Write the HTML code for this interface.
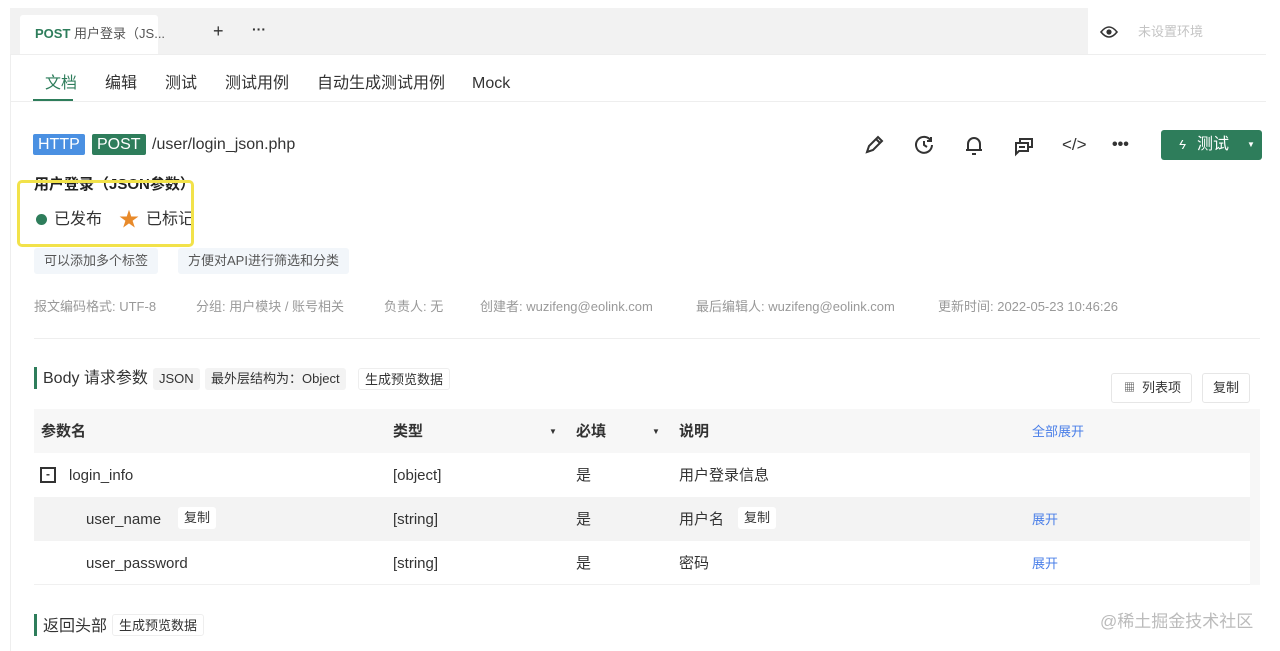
<!DOCTYPE html>
<html><head><meta charset="utf-8"><style>
*{margin:0;padding:0;box-sizing:border-box}
body{width:1280px;height:651px;background:#fff;font-family:"Liberation Sans","Noto Sans CJK SC",sans-serif;color:#333;position:relative;overflow:hidden;line-height:1.25}
.a{position:absolute;white-space:nowrap}
.tag{position:absolute;background:#f3f3f3;border-radius:3px;font-size:13px;color:#333;padding:0 6px;height:22px;line-height:22px}
.btn{position:absolute;border:1px solid #e6e6e6;background:#fff;border-radius:3px;font-size:13px;height:30px;line-height:28px;padding:0 10px}
.ic{position:absolute;width:24px;height:24px}
.meta{position:absolute;top:299px;font-size:13px;color:#999}
.row{position:absolute;left:34px;width:1216px;height:44px;font-size:15px}
.row span{position:absolute;top:13px;line-height:20px}
.blue{color:#4a7fe8;font-size:13px}
</style></head><body>
<div class="a" style="left:10px;top:8px;width:1256px;height:643px;border-left:1px solid #eee"></div>
<div class="a" style="left:10px;top:8px;width:1078px;height:46px;background:#f2f2f2"></div>
<div class="a" style="left:20px;top:15px;width:138px;height:39px;background:#fff;border-radius:3px 3px 0 0"></div>
<div class="a" style="left:35px;top:26px;font-size:13px;line-height:16px"><b style="color:#2e7d5b">POST</b> <span style="color:#555">用户登录（JS...</span></div>
<div class="a" style="left:213px;top:20px;font-size:18px;line-height:22px;color:#333">+</div>
<div class="a" style="left:252px;top:21px;font-size:14px;line-height:16px;font-weight:bold">···</div>
<div class="a" style="left:1088px;top:10px;width:178px;height:44px;background:#fff"></div>
<svg class="a" style="left:1100px;top:25px" width="18" height="14" viewBox="0 0 18 14"><path d="M1 7Q9 -3 17 7Q9 17 1 7Z" fill="none" stroke="#333" stroke-width="1.6"/><circle cx="9" cy="7" r="2.6" fill="#333"/></svg>
<div class="a" style="left:1138px;top:24px;font-size:13px;line-height:16px;color:#c4c4c4">未设置环境</div>
<div class="a" style="left:10px;top:54px;width:1256px;height:1px;background:#eee"></div>
<div class="a" style="left:45px;top:74px;font-size:16px;line-height:20px;color:#2e7d5b">文档</div>
<div class="a" style="left:33px;top:99px;width:40px;height:2px;background:#2e7d5b"></div>
<div class="a" style="left:105px;top:74px;font-size:16px;line-height:20px">编辑</div>
<div class="a" style="left:165px;top:74px;font-size:16px;line-height:20px">测试</div>
<div class="a" style="left:225px;top:74px;font-size:16px;line-height:20px">测试用例</div>
<div class="a" style="left:317px;top:74px;font-size:16px;line-height:20px">自动生成测试用例</div>
<div class="a" style="left:472px;top:74px;font-size:16px;line-height:20px">Mock</div>
<div class="a" style="left:10px;top:101px;width:1256px;height:1px;background:#eee"></div>

<div class="a" style="left:33px;top:134px;height:21px;line-height:21px;padding:0 5px;background:#4a90e2;color:#fff;font-size:16px;border-radius:2px">HTTP</div>
<div class="a" style="left:92px;top:134px;height:21px;line-height:21px;padding:0 5px;background:#2e7d5b;color:#fff;font-size:16px;border-radius:2px">POST</div>
<div class="a" style="left:152px;top:134px;font-size:16px;line-height:21px;color:#333">/user/login_json.php</div>

<svg class="ic" style="left:862px;top:133px" viewBox="0 0 24 24" fill="none" stroke="#333" stroke-width="2"><path d="M5 19l2-6 9-9 4 4-9 9z M14 6l4 4"/></svg>
<svg class="ic" style="left:912px;top:133px" viewBox="0 0 24 24" fill="none" stroke="#333" stroke-width="2"><path d="M19 8A8 8 0 1 0 20 12 M19 4v4h-4 M12 8v4l3 2"/></svg>
<svg class="ic" style="left:962px;top:133px" viewBox="0 0 24 24" fill="none" stroke="#333" stroke-width="2"><path d="M6 17V11a6 6 0 0 1 12 0v6z M4 17h16 M10 21h4"/></svg>
<svg class="ic" style="left:1012px;top:133px" viewBox="0 0 24 24" fill="none" stroke="#333" stroke-width="2"><path d="M4 10h12v8H7l-3 3z M8 10V6h12v8h-4 M7 14h6"/></svg>
<div class="a" style="left:1062px;top:135px;font-size:17px;line-height:20px;color:#333">&lt;/&gt;</div>
<div class="a" style="left:1112px;top:136px;font-size:16px;line-height:18px;font-weight:bold">•••</div>
<div class="a" style="left:1161px;top:130px;width:101px;height:30px;background:#2e7d5b;border-radius:3px;color:#fff;font-size:16px;line-height:30px;padding-left:36px">测试<span style="position:absolute;left:18px;top:0;font-size:13px;font-style:italic">ϟ</span><span style="position:absolute;left:86px;top:0;font-size:8px">▼</span></div>

<div class="a" style="left:34px;top:176px;font-size:15px;line-height:18px;font-weight:bold;color:#222">用户登录（JSON参数）</div>
<div class="a" style="left:36px;top:214px;width:11px;height:11px;border-radius:50%;background:#2e7d5b"></div>
<div class="a" style="left:54px;top:210px;font-size:16px;line-height:20px">已发布</div>
<div class="a" style="left:119px;top:208px;font-size:20px;line-height:24px;color:#e88a2a">★</div>
<div class="a" style="left:146px;top:210px;font-size:16px;line-height:20px;width:46px;overflow:hidden">已标记</div>
<div class="a" style="left:17px;top:180px;width:177px;height:67px;border:3px solid #f2e24a;border-radius:5px"></div>
<div class="tag" style="left:34px;top:248px;height:26px;line-height:26px;background:#f2f6fa;padding:0 10px;color:#555">可以添加多个标签</div>
<div class="tag" style="left:178px;top:248px;height:26px;line-height:26px;background:#f2f6fa;padding:0 10px;color:#555">方便对API进行筛选和分类</div>

<div class="meta" style="left:34px">报文编码格式: UTF-8</div>
<div class="meta" style="left:196px">分组: 用户模块 / 账号相关</div>
<div class="meta" style="left:384px">负责人: 无</div>
<div class="meta" style="left:480px">创建者: wuzifeng@eolink.com</div>
<div class="meta" style="left:696px">最后编辑人: wuzifeng@eolink.com</div>
<div class="meta" style="left:938px">更新时间:  2022-05-23 10:46:26</div>
<div class="a" style="left:34px;top:338px;width:1226px;height:1px;background:#eee"></div>

<div class="a" style="left:34px;top:367px;width:3px;height:22px;background:#2e7d5b"></div>
<div class="a" style="left:43px;top:369px;font-size:16px;line-height:20px">Body 请求参数</div>
<div class="tag" style="left:153px;top:368px">JSON</div>
<div class="tag" style="left:205px;top:368px">最外层结构为：Object</div>
<div class="tag" style="left:358px;top:368px;background:#fff;border:1px solid #eee">生成预览数据</div>
<div class="btn" style="left:1111px;top:373px;padding-left:30px">列表项<span style="position:absolute;left:12px;top:0;font-size:11px">▦</span></div>
<div class="btn" style="left:1202px;top:373px">复制</div>

<div class="a" style="left:34px;top:409px;width:1226px;height:44px;background:#f7f7f7"></div>
<div class="a" style="left:41px;top:422px;font-size:15px;line-height:20px;font-weight:bold">参数名</div>
<div class="a" style="left:393px;top:422px;font-size:15px;line-height:20px;font-weight:bold">类型</div>
<div class="a" style="left:549px;top:427px;font-size:8px;line-height:10px">▼</div>
<div class="a" style="left:576px;top:422px;font-size:15px;line-height:20px;font-weight:bold">必填</div>
<div class="a" style="left:652px;top:427px;font-size:8px;line-height:10px">▼</div>
<div class="a" style="left:679px;top:422px;font-size:15px;line-height:20px;font-weight:bold">说明</div>
<div class="a blue" style="left:1032px;top:423px;line-height:18px">全部展开</div>

<div class="row" style="top:453px;background:#fff"><span style="left:6px;top:14px;width:16px;height:16px;border:2px solid #333;font-size:12px;line-height:11px;text-align:center;font-weight:bold">-</span><span style="left:35px">login_info</span><span style="left:359px">[object]</span><span style="left:542px">是</span><span style="left:645px">用户登录信息</span></div>
<div class="row" style="top:497px;background:#f3f3f3"><span style="left:52px">user_name</span><span class="tag" style="position:absolute;left:144px;top:10px;line-height:22px;background:#fff">复制</span><span style="left:359px">[string]</span><span style="left:542px">是</span><span style="left:645px">用户名</span><span class="tag" style="position:absolute;left:704px;top:10px;line-height:22px;background:#fff">复制</span><span class="blue" style="left:998px;top:13px">展开</span></div>
<div class="row" style="top:541px;background:#fff;border-bottom:1px solid #f0f0f0"><span style="left:52px">user_password</span><span style="left:359px">[string]</span><span style="left:542px">是</span><span style="left:645px">密码</span><span class="blue" style="left:998px;top:13px">展开</span></div>
<div class="a" style="left:1250px;top:453px;width:10px;height:132px;background:#f7f7f7"></div>

<div class="a" style="left:34px;top:614px;width:3px;height:22px;background:#2e7d5b"></div>
<div class="a" style="left:43px;top:617px;font-size:16px;line-height:20px">返回头部</div>
<div class="tag" style="left:112px;top:614px;background:#fff;border:1px solid #eee">生成预览数据</div>
<div class="a" style="left:1100px;top:611px;font-size:17px;line-height:22px;color:#bbb">@稀土掘金技术社区</div>
</body></html>
